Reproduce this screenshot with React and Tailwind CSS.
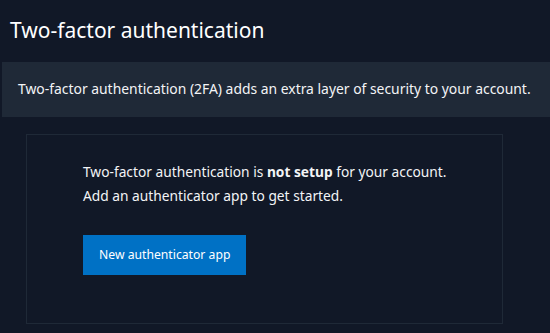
import React from 'react';

export default function App() {
  return (
    <div
      className="w-[550px] h-[333px] bg-[#111827] text-[#f3f4f6] overflow-hidden"
      style={{ fontFamily: '"Noto Sans", "Open Sans", sans-serif' }}
    >
      <h1 className="pl-[10px] pt-[15px] h-[62px] text-[21px] leading-[30px] font-normal text-white">
        Two-factor authentication
      </h1>
      <div className="ml-[2px] h-[55px] bg-[#1f2937] flex items-center pl-[16px] text-[13.9px]">
        Two-factor authentication (2FA) adds an extra layer of security to your account.
      </div>
      <div className="ml-[26px] mt-[17px] w-[477px] h-[190px] border border-[#1f2937] pl-[56px] pt-[25px]">
        <p className="text-[13.75px] leading-[24px]">
          Two-factor authentication is <strong className="font-bold">not setup</strong> for your account.
        </p>
        <p className="text-[13.75px] leading-[24px]">Add an authenticator app to get started.</p>
        <button className="mt-[27px] h-[40px] px-[16px] bg-[#0071c5] text-white text-[12.2px]">
          New authenticator app
        </button>
      </div>
    </div>
  );
}
